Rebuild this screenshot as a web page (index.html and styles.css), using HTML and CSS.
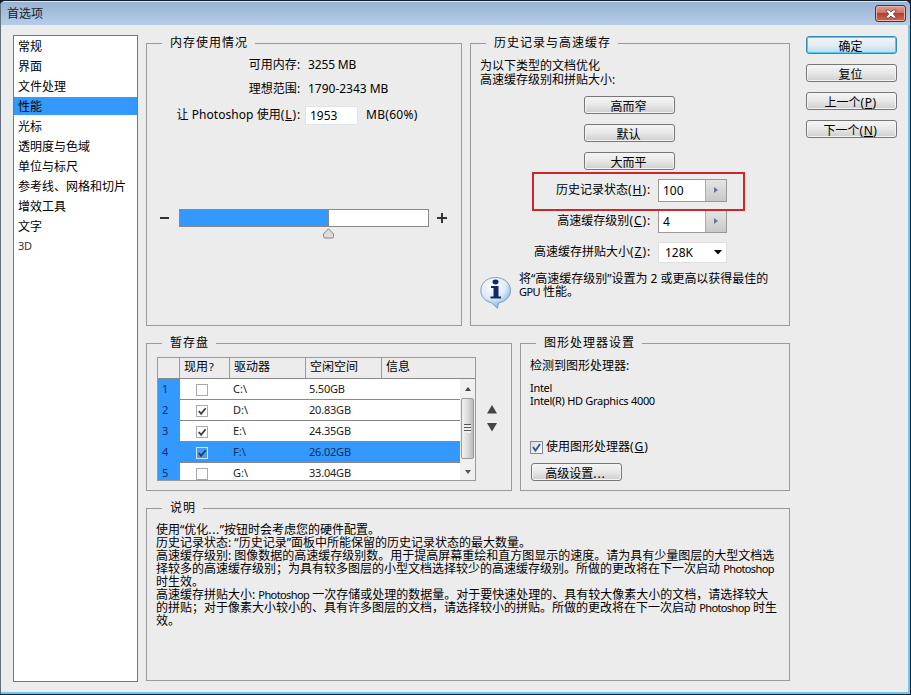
FILE: index.html
```html
<!DOCTYPE html>
<html lang="zh-CN">
<head>
<meta charset="utf-8">
<title>首选项</title>
<link rel="stylesheet" href="styles.css">
</head>
<body>
<div class="window">
  <header class="titlebar">
    <h1>首选项</h1>
    <button class="close" aria-label="关闭"><svg width="12" height="10" viewBox="0 0 12 10"><path d="M1 1h3l2 2 2-2h3v1L8.300 5 11 8v1H8L6 7 4 9H1V8l2.700-3L1 2z" fill="#fff" stroke="#6b3a3a" stroke-width=".8"/></svg></button>
  </header>
  <main class="content">
    <ul class="nav">
      <li>常规</li><li>界面</li><li>文件处理</li><li class="on">性能</li><li>光标</li><li>透明度与色域</li><li>单位与标尺</li><li>参考线、网格和切片</li><li>增效工具</li><li>文字</li><li class="three">3D</li>
    </ul>
    <div class="panels">
      <div class="row row-top">
        <section class="group memory">
          <h2>内存使用情况</h2>
          <div class="mrow"><span class="mlabel">可用内存<span class="key">:</span></span><span class="mval">3255 MB</span></div>
          <div class="mrow second"><span class="mlabel">理想范围<span class="key">:</span></span><span class="mval range">1790-2343 MB</span></div>
          <div class="mrow third"><span class="mlabel">让 <span class="ps">Photoshop</span> 使用<span class="key">(<u>L</u>):</span></span><span class="minput">1953</span><span class="pct">MB(60%)</span></div>
          <div class="slider">
            <i class="minus"></i>
            <div class="track"><div class="fill"></div><svg class="thumb" width="13" height="11" viewBox="0 0 13 11"><path d="M6.500.8 11.500 6v2.500q0 1.500-1.500 1.500H3q-1.500 0-1.500-1.500V6z" fill="#ddd" stroke="#858585"/></svg></div>
            <i class="plus"></i>
          </div>
        </section>
        <section class="group history">
          <h2>历史记录与高速缓存</h2>
          <p class="lead">为以下类型的文档优化<br>高速缓存级别和拼贴大小:</p>
          <div class="presets"><button class="btn">高而窄</button><button class="btn">默认</button><button class="btn">大而平</button></div>
          <div class="hrow h1"><span class="hl">历史记录状态<span class="key">(<u>H</u>):</span></span><div class="spin"><b>100</b><i><svg width="4" height="6" viewBox="0 0 4 6"><path d="M0 0l4 3-4 3z" fill="#6674a0"/></svg></i></div></div>
          <div class="hrow h2"><span class="hl">高速缓存级别<span class="key">(<u>C</u>):</span></span><div class="spin"><b>4</b><i><svg width="4" height="6" viewBox="0 0 4 6"><path d="M0 0l4 3-4 3z" fill="#6674a0"/></svg></i></div></div>
          <div class="hrow h3"><span class="hl">高速缓存拼贴大小<span class="key">(<u>Z</u>):</span></span><div class="select">128K<svg width="8" height="5" viewBox="0 0 8 5"><path d="M0 0h8L4 4.500z" fill="#000"/></svg></div></div>
          <div class="tip">
            <svg width="32" height="33" viewBox="0 0 32 33"><defs><radialGradient id="g" cx=".4" cy=".25" r=".8"><stop offset="0" stop-color="#fff"/><stop offset=".55" stop-color="#dcebf9"/><stop offset="1" stop-color="#6ca5dd"/></radialGradient></defs><path d="M15.500 1.500C7 1.500.8 7 .8 14.500c0 6 4.500 11 10.700 12.300L17.500 32.300l1-5.500c7-1.200 12-6 12-12.300 0-7.500-6.500-13-15-13z" fill="url(#g)" stroke="#7d9fc4"/><ellipse cx="15.500" cy="6" rx="3" ry="2.400" fill="#102b66"/><path d="M11 10h7.500v10.500H21v2H10.500v-2h3v-8.500H11z" fill="#102b66"/></svg>
            <p>将“高速缓存级别”设置为 2 或更高以获得最佳的<br><span class="small">GPU</span> 性能。</p>
          </div>
          <div class="highlight"></div>
        </section>
      </div>
      <div class="row row-mid">
        <section class="group scratch">
          <h2>暂存盘</h2>
          <div class="scratch-body">
            <div class="table">
              <div class="thead"><span></span><span>现用<span class="q">?</span></span><span>驱动器</span><span>空闲空间</span><span>信息</span></div>
              <div class="tbody">
                <div class="rows">
                  <div class="tr"><span>1</span><span><i class="cb"></i></span><span>C:\</span><span>5.50GB</span></div>
                  <div class="tr"><span>2</span><span><i class="cb"><svg viewBox="0 0 11 11"><path d="M2 5.500l2.500 3.200L9.500 2.500" fill="none" stroke="#3d3d3d" stroke-width="2"/></svg></i></span><span>D:\</span><span>20.83GB</span></div>
                  <div class="tr"><span>3</span><span><i class="cb"><svg viewBox="0 0 11 11"><path d="M2 5.500l2.500 3.200L9.500 2.500" fill="none" stroke="#3d3d3d" stroke-width="2"/></svg></i></span><span>E:\</span><span>24.35GB</span></div>
                  <div class="tr sel"><span>4</span><span><i class="cb"><svg viewBox="0 0 11 11"><path d="M2 5.500l2.500 3.200L9.500 2.500" fill="none" stroke="#163e6c" stroke-width="2"/></svg></i></span><span>F:\</span><span>26.02GB</span></div>
                  <div class="tr"><span>5</span><span><i class="cb"></i></span><span>G:\</span><span>33.04GB</span></div>
                </div>
                <div class="scroll"><svg width="6" height="4" viewBox="0 0 6 4"><path d="M0 4l3-4 3 4z" fill="#444"/></svg><div class="bar"><i></i></div><svg class="dn" width="6" height="4" viewBox="0 0 6 4"><path d="M0 0l3 4 3-4z" fill="#555"/></svg></div>
              </div>
            </div>
            <div class="arrows"><svg width="10" height="9" viewBox="0 0 10 9"><path d="M0 8.500L5 0l5 8.500z" fill="#444"/></svg><svg width="10" height="9" viewBox="0 0 10 9"><path d="M0 0h10L5 8.500z" fill="#444"/></svg></div>
          </div>
        </section>
        <section class="group gpu">
          <h2>图形处理器设置</h2>
          <p class="detected">检测到图形处理器:</p>
          <p class="card">Intel<br>Intel(R) HD Graphics 4000</p>
          <div class="use"><i class="cb2"><svg width="11" height="11" viewBox="0 0 11 11"><path d="M2 5l2.500 3.500L9 2" fill="none" stroke="#3e5a9b" stroke-width="2"/></svg></i>使用图形处理器<span class="key">(<u>G</u>)</span></div>
          <button class="btn adv">高级设置<span class="key">...</span></button>
        </section>
      </div>
      <section class="group desc">
        <h2>说明</h2>
        <p>使用“优化<span class="dots">...</span>”按钮时会考虑您的硬件配置。<br>历史记录状态: “历史记录”面板中所能保留的历史记录状态的最大数量。<br>高速缓存级别: 图像数据的高速缓存级别数。用于提高屏幕重绘和直方图显示的速度。请为具有少量图层的大型文档选<br>择较多的高速缓存级别；为具有较多图层的小型文档选择较少的高速缓存级别。所做的更改将在下一次启动 <span class="small">Photoshop</span><br>时生效。<br>高速缓存拼贴大小: <span class="small">Photoshop</span> 一次存储或处理的数据量。对于要快速处理的、具有较大像素大小的文档，请选择较大<br>的拼贴；对于像素大小较小的、具有许多图层的文档，请选择较小的拼贴。所做的更改将在下一次启动 <span class="small">Photoshop</span> 时生<br>效。</p>
      </section>
    </div>
    <div class="actions"><button class="btn primary">确定</button><button class="btn">复位</button><button class="btn">上一个<span class="par">(<u>P</u>)</span></button><button class="btn">下一个<span class="par">(<u>N</u>)</span></button></div>
  </main>
</div>
</body>
</html>
```
FILE: styles.css
```css
* { box-sizing: border-box; margin: 0; padding: 0; }
body {
  width: 911px; height: 695px; overflow: hidden; background: #15202b; color: #000;
  font: 12px/14px "Noto Sans", "Noto Sans CJK SC", sans-serif;
}
button { font: inherit; color: inherit; }
i, b { font-style: normal; font-weight: normal; }
u { text-underline-offset: 1px; }
svg { display: block; flex: none; }
.window {
  width: 911px; height: 695px; background: #ececec; overflow: hidden;
  border: solid #10202c; border-width: 1px 1px 1px 0; border-radius: 6px 6px 0 0;
  box-shadow: inset 1px 0 #62707b, inset -2px -2px #6fc6ee;
}
.titlebar {
  height: 24px; padding: 1px 4px 0 6px; display: flex; justify-content: space-between;
  background: linear-gradient(#9ab3d1, #b5cde8);
  border-top: 1px solid #d9e7f5; border-left: 1px solid #62707b;
}
.titlebar h1 { font-size: 12px; font-weight: normal; line-height: 22px; color: #17212d; }
.close {
  width: 31px; height: 17px; margin: 2px 0 0; border: 1px solid #5d2b30; border-radius: 3px;
  background: linear-gradient(#dfa092, #cd7467 45%, #b93e2e 50%, #cb6a55);
  box-shadow: inset 0 0 0 1px #e5b4aa; display: flex; align-items: center; justify-content: center;
}
.content { display: flex; padding: 10px 0 0 13px; }
.nav { width: 125px; height: 647px; border: 1px solid #777; background: #fff; list-style: none; padding-top: 1px; margin-right: 8px; }
.nav li { height: 20px; padding-left: 4px; line-height: 20px; }
.nav .on { background: linear-gradient(#39f, #39f) 0 0 / 100% 18px no-repeat; }
.nav .three { font-size: 11px; color: #333; line-height: 18px; letter-spacing: -.3px; }
.panels { width: 644px; padding-top: 8px; }
.row { display: flex; justify-content: space-between; }
.group { border: 1px solid #999; position: relative; white-space: nowrap; }
.group h2 {
  width: max-content; height: 14px; margin: -8px 0 0 15px; padding: 0 7px 0 8px;
  background: #ececec; font-size: 12px; font-weight: normal; letter-spacing: 1px; line-height: 14px;
}
.memory { width: 316px; height: 283px; }
.history { width: 320px; height: 283px; }
.row-mid { margin-top: 17px; }
.scratch { width: 366px; height: 148px; }
.gpu { width: 270px; height: 148px; }
.desc { height: 173px; margin-top: 17px; }

.key { letter-spacing: .9px; }
.par { letter-spacing: .5px; }
.dots { letter-spacing: .6px; }
.q { font-size: 11px; margin-left: 1px; }
.mrow { display: flex; align-items: center; height: 20px; margin-top: 4px; }
.mrow.third { margin-top: 6px; }
.memory .mrow:nth-child(2) { margin-top: 5px; }
.mlabel { width: 154px; text-align: right; }
.mval { margin-left: 7px; letter-spacing: -.15px; }
.range { letter-spacing: -.02px; }
.ps { letter-spacing: .05px; }
.minput { width: 53px; height: 19px; margin-left: 4px; padding-left: 4px; background: #fff; border: 1px solid #dfe4e8; line-height: 18px; }
.pct { margin-left: 8px; letter-spacing: .3px; }
.slider { display: flex; align-items: center; margin: 84px 0 0 13px; height: 18px; }
.minus { width: 9px; height: 2px; background: #333; margin-right: 10px; }
.track { width: 250px; height: 18px; border: 1px solid #888; background: #fff; position: relative; margin-right: 8px; }
.fill { width: 149px; height: 16px; background: #39f; border-right: 1px solid #888; }
.thumb { position: absolute; left: 142px; top: 18px; }
.plus { width: 10px; height: 10px; background: linear-gradient(#333, #333) 4px 0 / 2px 10px no-repeat, linear-gradient(#333, #333) 0 4px / 10px 2px no-repeat; }

.btn {
  display: flex; align-items: center; justify-content: center; width: 91px; height: 18px;
  border: 1px solid #777; border-radius: 3px; background: linear-gradient(#f5f5f5, #e8e8e8 48%, #cfcfcf);
  box-shadow: inset 0 0 0 1px #f4f4f4; line-height: 16px; padding: 3px 2px 0 0; white-space: nowrap;
}
.primary { border-color: #338bb5; background: linear-gradient(#f0f7fa, #e1edf3 50%, #bddcec); box-shadow: inset 0 0 0 1px #55c8ee; }
.actions { margin-left: 16px; padding-top: 1px; display: flex; flex-direction: column; gap: 10px; }
.lead { margin: 9px 0 0 9px; }
.presets { display: flex; flex-direction: column; gap: 10px; margin: 9px 0 0 113px; }
.hrow { display: flex; align-items: center; height: 22px; }
.hl { width: 180px; text-align: right; margin-right: 7px; }
.hrow.h1 { margin-top: 9px; }
.hrow.h2 { margin-top: 9px; }
.hrow.h3 { margin-top: 9px; }
.spin { width: 69px; height: 23px; background: #fff; border: 1px solid #999; display: flex; }
.spin b { width: 46px; padding-left: 4px; line-height: 22px; }
.spin i { flex: 1; border-left: 1px solid #aaa; background: linear-gradient(#e4e4e4, #c9c9c9); display: flex; align-items: center; justify-content: center; }
.select { width: 69px; height: 21px; background: #fff; border: 1px solid #e0e0e0; display: flex; align-items: center; justify-content: space-between; padding: 1px 4px 0 6px; }
.tip { display: flex; margin: 9px 0 0 9px; line-height: 13px; }
.tip svg { margin-top: 4px; }
.tip p { margin-left: 7px; letter-spacing: -.02px; }
.small { font-size: 11px; letter-spacing: -.6px; }
.highlight { position: absolute; left: 61px; top: 128px; width: 213px; height: 39px; border: 2px solid #cf252b; }

.scratch-body { display: flex; margin: 7px 0 0 10px; }
.table { width: 319px; height: 124px; border: 1px solid #999; overflow: hidden; }
.thead { display: flex; height: 21px; line-height: 18px; border-bottom: 1px solid #888; }
.thead > span { border-left: 1px solid #999; padding-left: 4px; }
.thead > span:nth-child(1) { width: 21px; border: 0; }
.thead > span:nth-child(2) { width: 50px; }
.thead > span:nth-child(3), .thead > span:nth-child(4) { width: 76px; }
.tbody { display: flex; background: #fff; height: 101px; overflow: hidden; }
.rows { width: 302px; font-size: 11px; }
.tr { display: flex; height: 21px; line-height: 20px; background: #fff; border-bottom: 1px solid #888; color: #222; }
.tr span:nth-child(1) { width: 22px; height: 21px; padding-left: 4px; background: #39f; color: #0d2f5e; position: relative; }
.tr span:nth-child(2) { width: 50px; padding: 5px 0 0 16px; }
.tr span:nth-child(3) { width: 76px; padding-left: 3px; }
.tr span:nth-child(4) { padding-left: 3px; letter-spacing: -.2px; }
.tr.sel { background: #39f; color: #0a2c56; }
.cb { display: block; width: 12px; height: 12px; border: 1px solid #aaa; }
.sel .cb { border-color: #cfe4fa; background: #4e9ce8; }
.scroll { width: 15px; background: #f0f0f0; display: flex; flex-direction: column; align-items: center; padding-top: 8px; }
.bar { width: 13px; height: 61px; margin-top: 7px; border: 1px solid #999; border-radius: 2px; background: linear-gradient(90deg, #f2f2f2, #dcdcdc 50%, #bbb); padding: 25px 0 0 2px; }
.bar i { display: block; width: 7px; height: 9px; background: repeating-linear-gradient(#555 0 1px, #eee 1px 3px); }
.dn { margin-top: 11px; }
.arrows { display: flex; flex-direction: column; gap: 9px; padding-top: 48px; margin-left: 11px; }

.detected { margin: 9px 0 0 9px; }
.card { margin: 8px 0 0 9px; font-size: 11px; line-height: 13px; letter-spacing: -.3px; }
.use { display: flex; align-items: center; margin: 32px 0 0 9px; height: 16px; }
.cb2 { width: 13px; height: 13px; border: 1px solid #7e8aa0; background: linear-gradient(135deg, #d5dbe5, #fff); margin-right: 3px; }
.adv { margin: 8px 0 0 10px; }
.desc p { margin: 8px 0 0 9px; line-height: 13px; }
```
